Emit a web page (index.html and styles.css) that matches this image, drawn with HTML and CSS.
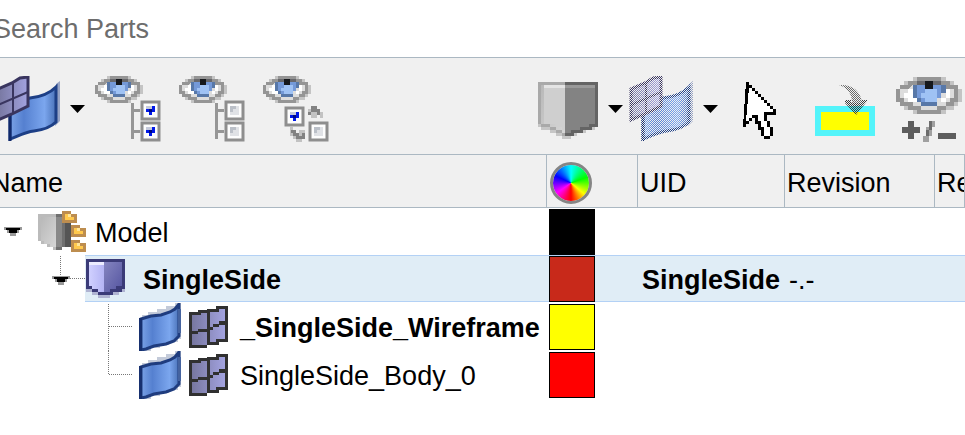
FILE: index.html
```
<!DOCTYPE html>
<html lang="en">
<head>
    <meta charset="utf-8">
    <title>Parts</title>
    <link rel="stylesheet" href="styles.css">
</head>
<body>
    <!-- shared icon parts -->
    <svg class="defs" width="0" height="0" aria-hidden="true">
        <defs>
            <linearGradient id="film" x1="0" x2="1" y1="0" y2="0">
                <stop offset="0" stop-color="#7aa2e6"/>
                <stop offset=".3" stop-color="#5580d0"/>
                <stop offset=".75" stop-color="#7ba6ee"/>
                <stop offset="1" stop-color="#4a72b8"/>
            </linearGradient>
            <linearGradient id="mesh" x1="0" x2="1" y1="0" y2="0">
                <stop offset="0" stop-color="#7777a0"/>
                <stop offset="1" stop-color="#a3a3e0"/>
            </linearGradient>
            <linearGradient id="lilac" x1="0" x2="1" y1="0" y2="0">
                <stop offset="0" stop-color="#d0d0ff"/>
                <stop offset="1" stop-color="#b4b4f4"/>
            </linearGradient>
            <linearGradient id="violet" x1="0" x2="1" y1="0" y2="1">
                <stop offset="0" stop-color="#8585c0"/>
                <stop offset="1" stop-color="#5555a0"/>
            </linearGradient>
            <linearGradient id="gray" x1="0" x2="1" y1="0" y2="1">
                <stop offset="0" stop-color="#b8b8b8"/>
                <stop offset="1" stop-color="#d6d6d6"/>
            </linearGradient>
            <pattern id="dots" width="2" height="2" patternUnits="userSpaceOnUse">
                <path fill="#fff" d="M0 0h1v1h-1zM1 1h1v1h-1z"/>
            </pattern>
            <mask id="dither" maskUnits="userSpaceOnUse" x="0" y="0" width="70" height="70">
                <rect width="70" height="70" fill="url(#dots)"/>
            </mask>

            <symbol id="eye" viewBox="0 0 16 9">
                <g shape-rendering="crispEdges">
                    <path fill="#c4c4c4" d="M4 0h8v1h2v1h1v1h1v3h-1v1h-1v1h-2v1h-8v-1h-2v-1h-1v-1h-1v-3h1v-1h1v-1h2z"/>
                    <path fill="#959595" d="M5 0h6v1h2v1h2v4h-1v1h-2v1h-1v1h-6v-1h-2v-1h-2v-1h-1v-3h1v-1h2v-1h2z"/>
                    <path fill="#ddd" d="M4 2h8v1h2v2h-1v1h-1v1h-2v1h-4v-1h-2v-1h-2v-1h-1v-2h2z"/>
                    <path fill="#fff" d="M3 3h1v2h1v1h-2v-1h-1v-1h1zM12 3h1v2h-1v1h-1v-1h1z"/>
                    <path fill="#5878a8" d="M4 2h1v-1h6v1h1v2h-1v1h-1v2h-4v-1h-1v-1h-1z"/>
                    <path fill="#7499d8" d="M5 2h6v3h-1v1h-4v-1h-1z"/>
                    <path fill="#9fc2f4" d="M6 4h1v-1h3v3h-3v-1h-1z"/>
                    <path fill="#68686c" d="M5 1h6v1h-6z"/>
                    <path fill="#16181c" d="M7 1h2v2h-2z"/>
                </g>
            </symbol>
            <symbol id="film-mesh" viewBox="0 0 66 66">
                <path fill="#98a4c4" d="M60 8l4-3v40l-5 5z"/>
                <path fill="url(#film)" stroke="#1d3f86" stroke-width="3" d="M14 27L34 22C44 21 53 18 60 11V46C54 52 46 54 38 55 29 56 20 61 14 63z"/>
                <path fill="none" stroke="#10296a" stroke-width="3" d="M14 30v35"/>
                <path fill="url(#mesh)" stroke="#39355f" stroke-width="3" d="M2 13L16 7 24 2 32 1V30L16 38 2 44z"/>
                <path fill="none" stroke="#39355f" stroke-width="2" d="M17 7v31M2 29l30-13"/>
            </symbol>
            <symbol id="box-on" viewBox="0 0 21 21">
                <path fill="#fdfdfd" stroke="#8e8e8e" stroke-width="3" d="M2 2h17v17H2z"/>
                <path fill="#c5cadb" d="M6 6h6v3H6z"/>
                <path fill="#0018e8" d="M6 9h3v1h3V6h3v6h-3v3H9v-3H6z"/>
                <path fill="#000a80" d="M9 9h3v3H9z"/>
            </symbol>
            <symbol id="box-off" viewBox="0 0 21 21">
                <path fill="#fdfdfd" stroke="#8e8e8e" stroke-width="3" d="M2 2h17v17H2z"/>
                <path fill="#e0e2e6" d="M6 6h9v9H6z"/>
                <path fill="#bbc0c8" d="M6 6h6v3H9v3H6z"/>
            </symbol>
            <symbol id="surface" viewBox="0 0 42 48">
                <path fill="#c3cad9" d="M3 12h6V9h9V6h9V3h9V0h6v36h-3v3h-9v3h-9v3h-9v3H3z"/>
                <path fill="url(#film)" stroke="#1f3c7e" stroke-width="3" d="M2 16l10-3 10-1 9-3 5-3 4-5v32l-5 5-8 3-12 2-8 3-5 1z"/>
                <path fill="#17306f" d="M0 15h3v33H0z"/>
                <path fill="#45639f" d="M39 6h3v24h-3z"/>
            </symbol>
            <symbol id="grid" viewBox="0 0 39 42">
                <g shape-rendering="crispEdges">
                    <path fill="#303030" d="M0 6h9V4h9V3h9V0h12v36h-9v3H18v3H0z"/>
                    <path fill="url(#mesh)" d="M3 9h9V7h6v16h-9v2H3zM21 6h9V3h6v12h-6v3h-6v3h-3zM3 28h6v-2h9v13H3zM21 24h3v-3h6v-2h6v14h-9v3h-6z"/>
                </g>
            </symbol>
            <symbol id="expander" viewBox="0 0 18 9">
                <path fill="#999" d="M0 0h18v3h-3v3H3V3H0zM6 6h6v3H6z"/>
                <path fill="#000" d="M2 1h14v2h-3v3H5V3H2z"/>
            </symbol>
            <symbol id="caret" viewBox="0 0 15 8">
                <path d="M0 0h15L7.500 8z"/>
            </symbol>
        </defs>
    </svg>

    <main class="panel">
        <input class="search" type="text" placeholder="Search Parts" aria-label="Search Parts">

        <div class="toolbar">
            <div class="split">
                <button aria-label="Show surfaces and wireframe"><svg width="66" height="66"><use href="#film-mesh"/></svg></button>
                <button aria-label="Display options"><svg width="15" height="8"><use href="#caret"/></svg></button>
            </div>
            <button aria-label="Show all">
                <svg width="66" height="66" viewBox="0 0 66 66">
                    <use href="#eye" width="48" height="27"/>
                    <path fill="#969696" d="M36 27h3v6h6v3h-6v18h6v3h-6v6h-3z"/>
                    <use href="#box-on" x="45" y="24" width="21" height="21"/>
                    <use href="#box-on" x="45" y="45" width="21" height="21"/>
                </svg>
            </button>
            <button aria-label="Hide all">
                <svg width="66" height="66" viewBox="0 0 66 66">
                    <use href="#eye" width="48" height="27"/>
                    <path fill="#969696" d="M36 27h3v6h6v3h-6v18h6v3h-6v6h-3z"/>
                    <use href="#box-off" x="45" y="24" width="21" height="21"/>
                    <use href="#box-off" x="45" y="45" width="21" height="21"/>
                </svg>
            </button>
            <button aria-label="Reverse visibility">
                <svg width="66" height="66" viewBox="0 0 66 66">
                    <use href="#eye" width="48" height="27"/>
                    <g shape-rendering="crispEdges">
                        <path fill="#c2c2c2" d="M45 33h3v-3h6v3h3v3h3v6h-3v-3h-3v3h-6v-3h-3zM27 51h3v3h3v3h3v-3h6v9h-3v3h-6v-3h-3v-3h-3z"/>
                        <path fill="#828282" d="M48 30h6v3h3v6h-3v-3h-6v3h-3v-3h3zM28 54h5v3h3v3h3v-3h3v6h-9v-3h-3v-3h-2z"/>
                    </g>
                    <use href="#box-on" x="21" y="30" width="21" height="21"/>
                    <use href="#box-off" x="45" y="45" width="21" height="21"/>
                </svg>
            </button>

            <div class="split push">
                <button aria-label="Shaded view">
                    <svg width="64" height="66" viewBox="0 0 64 66">
                        <g shape-rendering="crispEdges">
                            <path fill="#c6c6c6" d="M2 48h60v3h-3v3h-9v3h-9v3h-6v3h-9v-3h-6v-3h-6v-3H5v-3H2z"/>
                            <path fill="#a9a9a9" d="M2 6h27v54h-3v-3h-6v-3h-6v-3H5v-3H2z"/>
                            <path fill="url(#gray)" d="M5 9h24v48h-3v-3h-6v-3h-6v-3H5z"/>
                            <path fill="#cfcfcf" d="M8 12h21v42h-3v-3h-6v-3H8z"/>
                            <path fill="#e4e4e4" d="M8 9h21v3H8z"/>
                            <path fill="#646464" d="M29 6h33v45h-6v3h-9v3h-9v3h-9z"/>
                            <path fill="#838383" d="M29 9h30v39h-6v3h-9v3h-9v3h-6z"/>
                            <path fill="#999" d="M29 9h30v3H29z"/>
                        </g>
                    </svg>
                </button>
                <button aria-label="Shading options"><svg width="15" height="8"><use href="#caret"/></svg></button>
            </div>
            <div class="split">
                <button aria-label="Surface view" disabled>
                    <svg width="66" height="66" viewBox="0 0 66 66"><g mask="url(#dither)"><use href="#film-mesh" width="66" height="66"/></g></svg>
                </button>
                <button aria-label="Surface options"><svg width="15" height="8"><use href="#caret"/></svg></button>
            </div>
            <button aria-label="Select">
                <svg width="66" height="66" viewBox="-6 -2 22 22" shape-rendering="crispEdges">
                    <path d="M0 0h1v1h1v1h1v1h1v1h1v1h1v1h1v1h1v1h1v1h1v2h-3v2h1v2h1v3h-1v1h-2v-1h-1v-2h-1v-2h-1v-2h-1v1h-1v1h-1v1h-1z"/>
                    <path fill="#fff" d="M1 2h1v1h1v1h1v1h1v1h1v1h1v1h1v1h1v1h-3v3h1v2h1v3h-2v-3h-1v-2h-1v-2h-2v1h-1v1h-1z"/>
                </svg>
            </button>
            <button aria-label="Move to layer" disabled>
                <svg width="66" height="66" viewBox="0 0 66 66">
                    <path fill="#54f4fa" d="M3 30h60v30H3z"/>
                    <path fill="#ff0" d="M9 36h48v18H9z"/>
                    <g mask="url(#dither)">
                        <path fill="#3c3c3c" d="M33 24h6v3h9v-3h8L44 39 33 27z"/>
                        <path fill="#686868" d="M27 9c13-1 22 6 23 18H40C40 18 36 12 27 9z"/>
                    </g>
                </svg>
            </button>
            <button aria-label="Show or hide">
                <svg width="69" height="66" viewBox="0 0 69 66">
                    <use href="#eye" width="66" height="39"/>
                    <g fill="#5d5d5d">
                        <path d="M12 45h6v6h6v6h-6v6h-6v-6H6v-6h6zM42 57h18v6H42z"/>
                        <path fill="#a0a0a0" d="M33 45h6v6h-3v9h-3v6h-6v-6h3v-9h3z"/>
                        <path fill="#6c6c6c" d="M33 45h3v9h-3v6h-3v-6h3z"/>
                    </g>
                </svg>
            </button>
        </div>

        <table class="parts">
            <colgroup>
                <col class="col-name">
                <col class="col-color">
                <col class="col-uid">
                <col class="col-revision">
                <col>
            </colgroup>
            <thead>
                <tr>
                    <th>Name</th>
                    <th aria-label="Color"><div class="wheel"></div></th>
                    <th>UID</th>
                    <th>Revision</th>
                    <th>Re</th>
                </tr>
            </thead>
            <tbody>
                <tr>
                    <td>
                        <div class="node level-0">
                            <button aria-label="Collapse Model"><svg width="18" height="9"><use href="#expander"/></svg></button>
                            <div class="label model">
                                <svg width="48" height="42" viewBox="0 0 48 42" shape-rendering="crispEdges">
                                    <path fill="#bbb" d="M0 3h22v36h-7v-3H9v-3H3v-3H0z"/>
                                    <path fill="url(#gray)" d="M3 6h15v30h-6v-3H6v-3H3z"/>
                                    <path fill="#707070" d="M18 3h15v33h-9v3h-6z"/>
                                    <path fill="#888" d="M18 6h6v30h-6z"/>
                                    <path fill="#555" d="M27 12h6v3h6v3h-6v12h6v3h-6v3h-6z"/>
                                    <path fill="#bd8d4f" d="M24 0h9v3h6v9H24zM33 14h9v3h6v9H33zM33 29h9v3h6v9H33z"/>
                                    <path fill="#ffc94d" d="M27 3h6v3h3v3h-9zM36 17h6v3h3v3h-9zM36 32h6v3h3v3h-9z"/>
                                    <path fill="#ffe69a" d="M30 3h3v3h-3zM39 17h3v3h-3zM39 32h3v3h-3z"/>
                                </svg>
                                <span>Model</span>
                            </div>
                        </div>
                    </td>
                    <td><div class="swatch black"></div></td>
                    <td></td>
                    <td></td>
                    <td></td>
                </tr>
                <tr class="selected">
                    <td>
                        <div class="node level-1">
                            <button aria-label="Collapse SingleSide">
                                <svg width="33" height="47" viewBox="0 0 33 47">
                                    <path class="branch" d="M8.500 1v20M18 23.500h15"/>
                                    <use href="#expander" y="21" width="18" height="9"/>
                                </svg>
                            </button>
                            <div class="label part">
                                <svg width="40" height="39" viewBox="0 0 40 39" shape-rendering="crispEdges">
                                    <path fill="#b0b4d2" d="M1 30h39v3h-6v3h-9v3H13v-3H7v-3H1z"/>
                                    <path fill="#3b3b78" d="M1 0h39v30h-3v3h-9v3H13v-3H7v-3H1z"/>
                                    <path fill="url(#lilac)" d="M4 3h15v30h-6v-3H7v-3H4z"/>
                                    <path fill="url(#violet)" d="M19 3h18v24h-6v3h-6v3h-6z"/>
                                    <path fill="#ececff" d="M4 3h15v3H4z"/>
                                </svg>
                                <span>SingleSide</span>
                            </div>
                        </div>
                    </td>
                    <td><div class="swatch brick"></div></td>
                    <td><b>SingleSide</b></td>
                    <td>-.-</td>
                    <td></td>
                </tr>
                <tr>
                    <td>
                        <div class="node level-2">
                            <svg width="25" height="48"><path class="branch" d="M.5 1v47M1 23.500h24"/></svg>
                            <div class="label body">
                                <svg width="42" height="48"><use href="#surface"/></svg>
                                <svg width="39" height="42"><use href="#grid"/></svg>
                                <b>_SingleSide_Wireframe</b>
                            </div>
                        </div>
                    </td>
                    <td><div class="swatch yellow"></div></td>
                    <td></td>
                    <td></td>
                    <td></td>
                </tr>
                <tr>
                    <td>
                        <div class="node level-2">
                            <svg width="25" height="48"><path class="branch" d="M.5 0v24M1 23.500h24"/></svg>
                            <div class="label body">
                                <svg width="42" height="48"><use href="#surface"/></svg>
                                <svg width="39" height="42"><use href="#grid"/></svg>
                                <span>SingleSide_Body_0</span>
                            </div>
                        </div>
                    </td>
                    <td><div class="swatch red"></div></td>
                    <td></td>
                    <td></td>
                    <td></td>
                </tr>
            </tbody>
        </table>
    </main>
</body>
</html>
```
FILE: styles.css
```
* {
    box-sizing: border-box;
}
body {
    margin: 0;
    overflow: hidden;
    background: #fff;
    color: #000;
    font-family: "Liberation Sans", Arial, sans-serif;
    font-size: 27px;
}
.defs {
    position: absolute;
}
svg {
    display: block;
    flex: none;
}
button {
    display: block;
    padding: 0;
    border: none;
    background: none;
}
/* the panel is scrolled a little past its left edge */
.panel {
    margin-left: -11px;
}
.search {
    display: block;
    width: 100%;
    height: 57px;
    padding: 2px 4px 0;
    border: none;
    outline: none;
    background: #fff;
    font: inherit;
}
.search::placeholder {
    color: #6d6d6d;
}

/* toolbar */
.toolbar {
    display: flex;
    align-items: center;
    gap: 18px;
    padding: 18px 0 12px 7px;
    border-top: 1px solid #abb8c2;
    background: #f0f0f0;
}
.split {
    display: flex;
    align-items: center;
    gap: 8px;
    margin-right: -8px;
}
.split + .split {
    margin-left: -4px;
}
.push {
    margin-left: auto;
}

/* parts table */
.parts {
    width: 100%;
    table-layout: fixed;
    border-collapse: separate;
    border-spacing: 0;
}
.col-name {
    width: 558px;
}
.col-color {
    width: 91px;
}
.col-uid {
    width: 147px;
}
.col-revision {
    width: 150px;
}
th {
    height: 53px;
    padding: 4px 2px 0;
    border-top: 1px solid #abb8c2;
    border-right: 1px solid #abb8c2;
    background: #f0f0f0;
    font-weight: normal;
    text-align: left;
    white-space: nowrap;
    overflow: hidden;
}
td {
    height: 48px;
    padding: 3px 4px 0;
    border-bottom: 1px solid #fff;
    line-height: 44px;
    white-space: nowrap;
}
td:first-child,
td:nth-child(2) {
    padding: 0;
}
tbody tr:first-child td {
    border-top: 1px solid #abb8c2;
    border-bottom: none;
}
.wheel {
    width: 42px;
    height: 42px;
    margin-left: 1px;
    border: 3px solid #858585;
    border-radius: 50%;
    background: conic-gradient(#0ff, #0f0 70deg, #ff0 130deg, #f00 180deg, #f0f 235deg, #00f 295deg, #0ff) border-box;
    background-clip: padding-box;
}
.swatch {
    width: 46px;
    height: 46px;
    margin: 1px 0 0 2px;
    border: 1px solid #000;
}
.black {
    background: #000;
}
.brick {
    background: #c8291a;
}
.yellow {
    background: #ff0;
}
.red {
    background: #f00;
}

/* tree */
.node,
.label {
    display: flex;
    align-items: center;
    height: 47px;
}
.label {
    flex: 1;
}
.label b,
.label span {
    padding-top: 3px;
}
.level-0 {
    gap: 16px;
    padding-left: 15px;
}
.level-1 {
    padding-left: 63px;
}
.level-2 {
    gap: 6px;
    padding-left: 119px;
}
.model {
    gap: 9px;
}
.part {
    gap: 18px;
    font-weight: bold;
}
.body {
    gap: 8px;
}
.body b,
.body span {
    margin-left: 4px;
}
.branch {
    fill: none;
    stroke: #777;
    stroke-dasharray: 1 1;
}
.selected .label,
.selected td:not(:first-child) {
    background: #e0edf6;
    background-clip: padding-box;
    box-shadow: inset 0 1px #b3d1f5, inset 0 -1px #b3d1f5;
}
```
